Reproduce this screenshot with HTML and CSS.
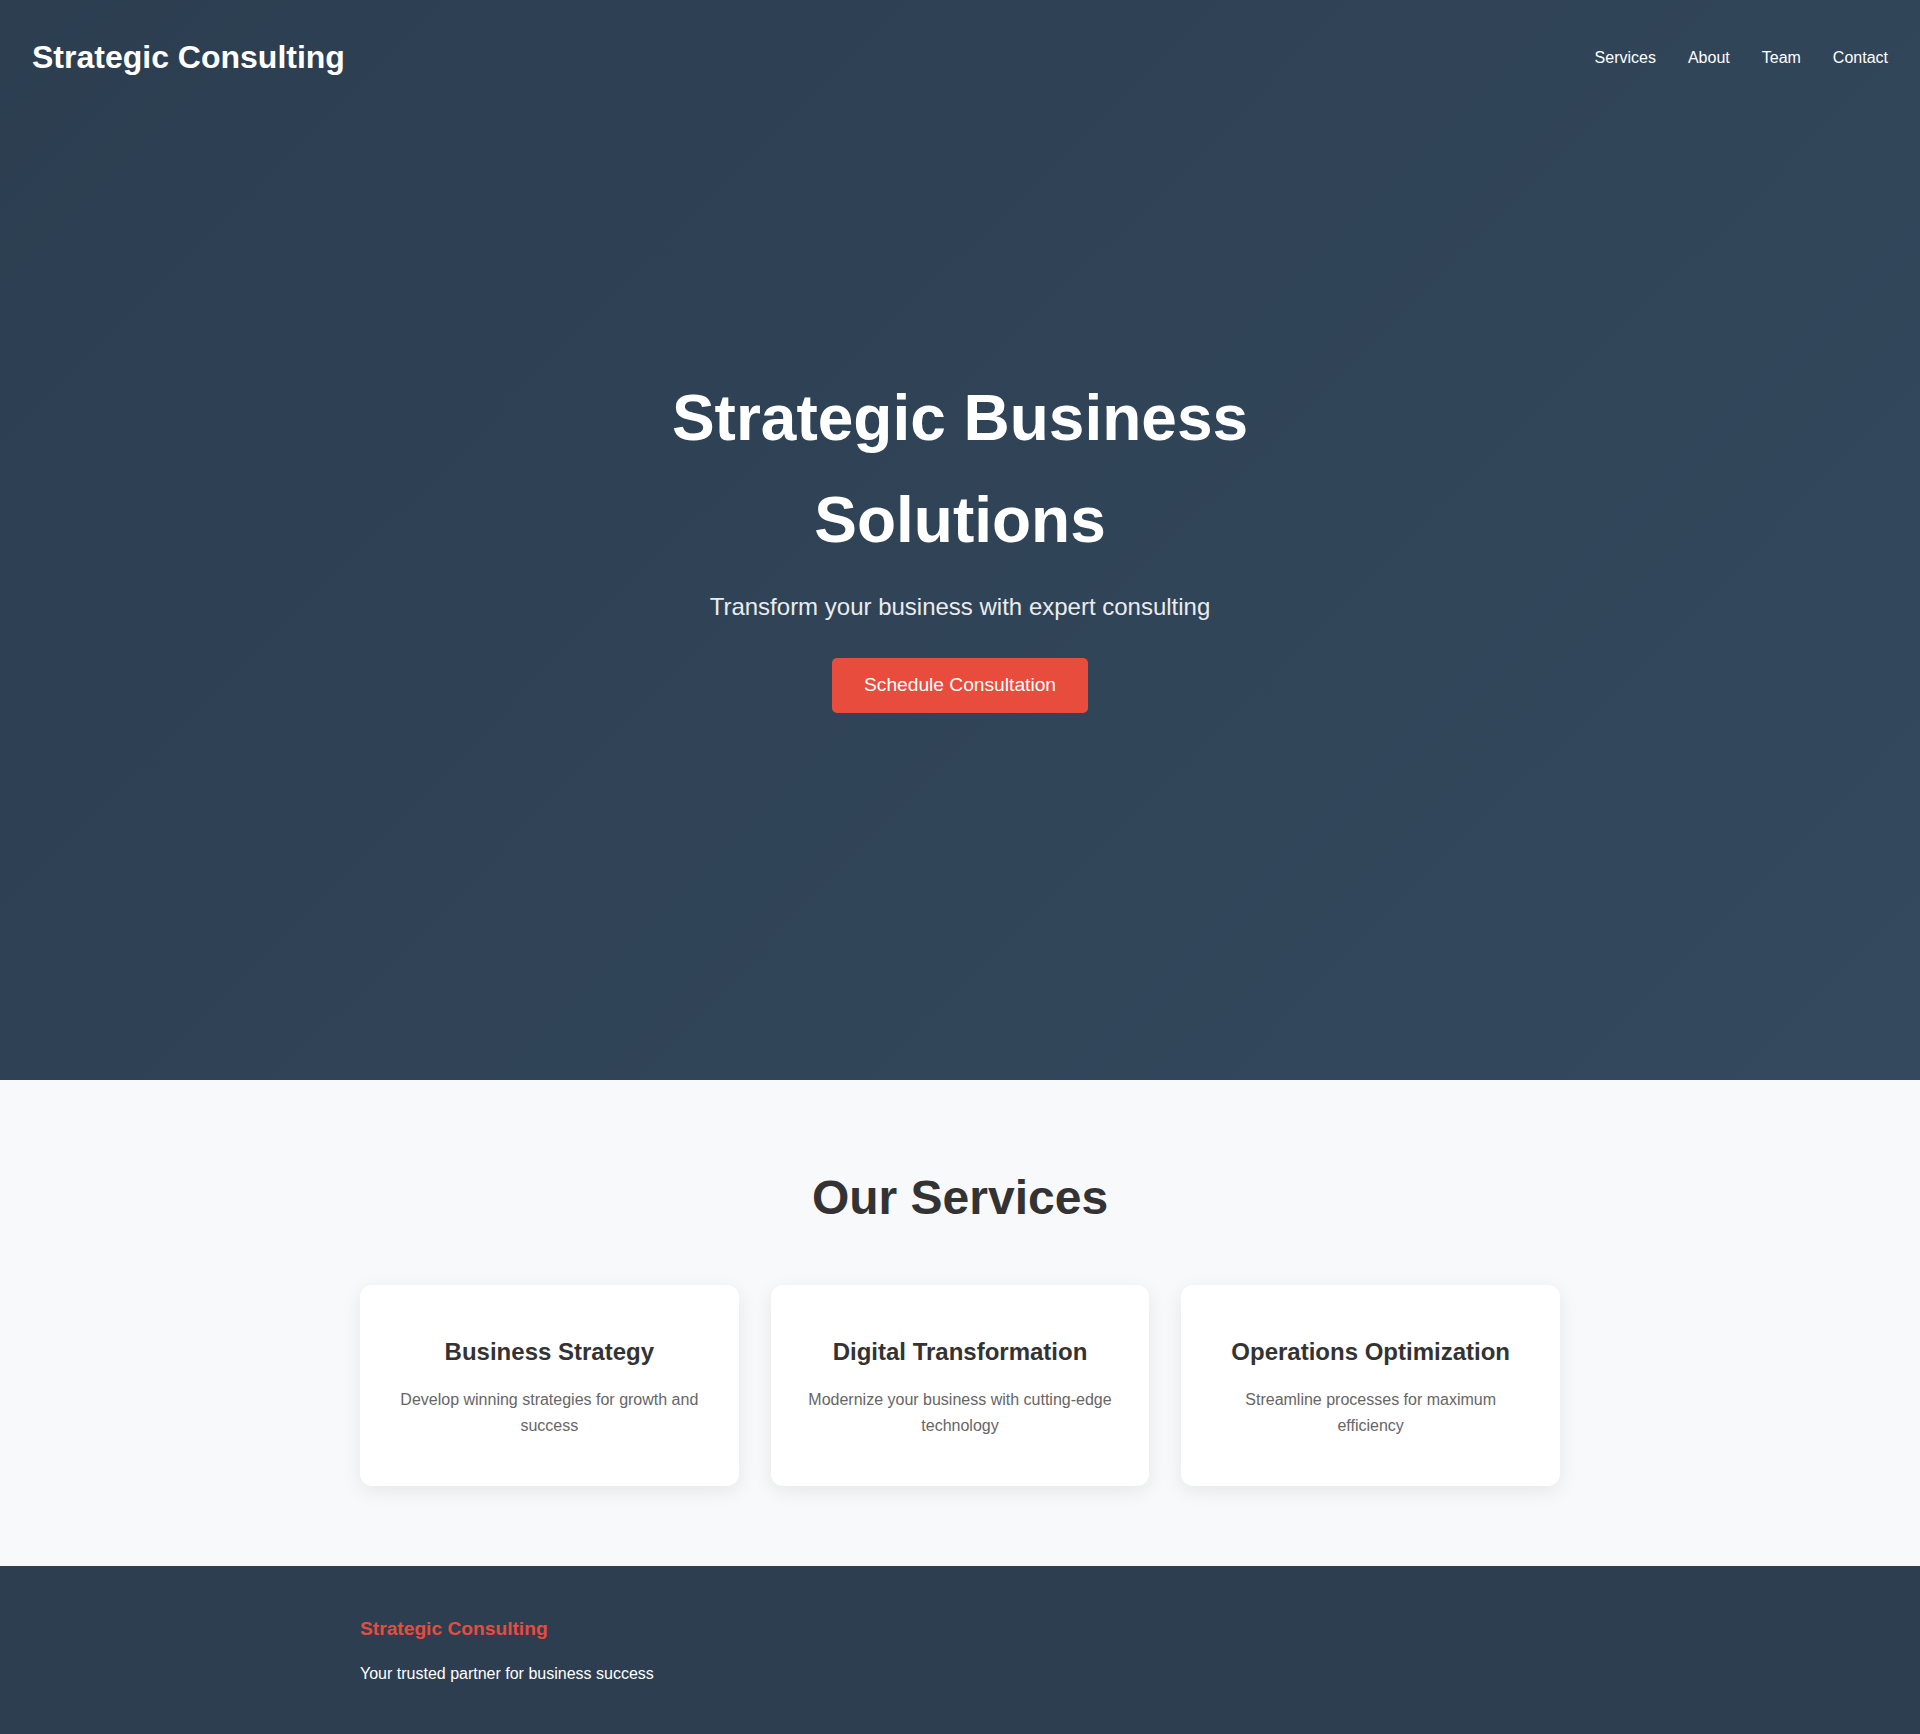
FILE: index.html
```html
<!DOCTYPE html>
<html lang="en">
<head>
<meta charset="utf-8">
<title>Strategic Consulting</title>
<link rel="stylesheet" href="styles.css">
</head>
<body>
<header class="site-header">
  <div class="logo">Strategic Consulting</div>
  <nav class="nav">
    <a href="#services">Services</a>
    <a href="#about">About</a>
    <a href="#team">Team</a>
    <a href="#contact">Contact</a>
  </nav>
</header>
<section class="hero">
  <div class="hero-content">
    <h1 class="hero-title">Strategic Business Solutions</h1>
    <p class="hero-sub">Transform your business with expert consulting</p>
    <a class="btn" href="#contact">Schedule Consultation</a>
  </div>
</section>
<section class="services" id="services">
  <h2 class="section-title">Our Services</h2>
  <div class="cards">
    <div class="card">
      <h3 class="card-title">Business Strategy</h3>
      <p class="card-text">Develop winning strategies for growth and success</p>
    </div>
    <div class="card">
      <h3 class="card-title">Digital Transformation</h3>
      <p class="card-text">Modernize your business with cutting-edge technology</p>
    </div>
    <div class="card">
      <h3 class="card-title">Operations Optimization</h3>
      <p class="card-text">Streamline processes for maximum efficiency</p>
    </div>
  </div>
</section>
<footer class="footer" id="contact">
  <div class="footer-inner">
    <h3 class="footer-title">Strategic Consulting</h3>
    <p class="footer-text">Your trusted partner for business success</p>
  </div>
</footer>
</body>
</html>
```

FILE: styles.css
```css
* {
  box-sizing: border-box;
  margin: 0;
  padding: 0;
}

body {
  font-family: "Liberation Sans", Arial, Helvetica, sans-serif;
  line-height: 1.6;
  color: #333;
  background: #fff;
  position: relative;
}

.site-header {
  position: absolute;
  top: 0;
  left: 0;
  right: 0;
  display: flex;
  justify-content: space-between;
  align-items: center;
  padding: 2rem 2rem;
  z-index: 10;
}

.logo {
  font-size: 2rem;
  font-weight: 700;
  color: #fff;
}

.nav {
  display: flex;
  gap: 2rem;
}

.nav a {
  color: #fff;
  text-decoration: none;
  font-size: 1rem;
}

.hero {
  min-height: 1080px;
  display: flex;
  align-items: center;
  justify-content: center;
  text-align: center;
  color: #fff;
  background: linear-gradient(135deg, #2c3e50 0%, #34495e 100%);
}

.hero-content {
  max-width: 800px;
  padding: 0 2rem;
}

.hero-title {
  font-size: 4rem;
  font-weight: 700;
  line-height: 1.6;
  margin-bottom: 1rem;
}

.hero-sub {
  font-size: 1.5rem;
  opacity: 0.9;
  margin-bottom: 2rem;
}

.btn {
  display: inline-block;
  background: #e74c3c;
  color: #fff;
  text-decoration: none;
  font-size: 1.2rem;
  line-height: 1.6;
  padding: 0.75rem 2rem;
  border-radius: 5px;
}

.services {
  background: #f8f9fa;
  padding: 5rem 2rem;
}

.section-title {
  text-align: center;
  font-size: 3rem;
  font-weight: 700;
  color: #333;
  margin-bottom: 3rem;
}

.cards {
  max-width: 1200px;
  margin: 0 auto;
  display: grid;
  grid-template-columns: repeat(3, 1fr);
  gap: 2rem;
}

.card {
  background: #fff;
  border-radius: 12px;
  padding: 3rem 2rem;
  text-align: center;
  box-shadow: 0 5px 20px rgba(0, 0, 0, 0.08);
}

.card-title {
  font-size: 1.5rem;
  font-weight: 700;
  color: #333;
  margin-bottom: 1rem;
}

.card-text {
  font-size: 1rem;
  color: #666;
}

.footer {
  background: #2c3e50;
  color: #fff;
  padding: 3rem 2rem;
}

.footer-inner {
  max-width: 1200px;
  margin: 0 auto;
}

.footer-title {
  font-size: 1.2rem;
  font-weight: 700;
  color: #e74c3c;
  margin-bottom: 1rem;
}

.footer-text {
  font-size: 1rem;
}
```
